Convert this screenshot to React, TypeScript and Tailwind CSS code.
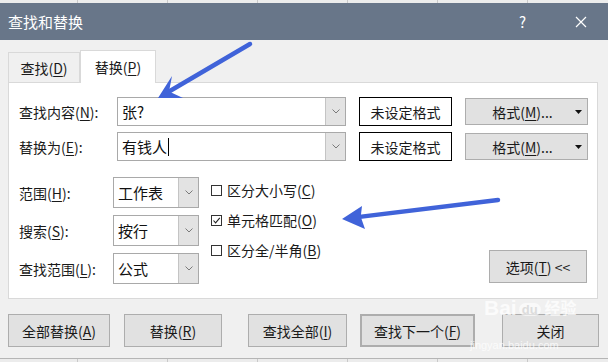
import type { JSX } from 'react';

const GRID_COLS = [78, 90, 90, 90, 90, 90, 90];

function SheetStrip({ top }: { top: boolean }): JSX.Element {
  return (
    <div className={`flex h-[4px] bg-[#ececec] ${top ? 'border-b border-[#9aa3ae]' : 'border-t border-[#b5b5b5]'}`}>
      {GRID_COLS.map((w, i) => (
        <div key={i} className="h-full shrink-0 border-r border-[#c9c9c9]" style={{ width: w }} />
      ))}
    </div>
  );
}

function Chevron(): JSX.Element {
  return (
    <svg width="8" height="5" viewBox="0 0 8 5">
      <path d="M0.5 0.5 L4 4 L7.5 0.5" fill="none" stroke="#7a7a7a" strokeWidth="1" />
    </svg>
  );
}

function Combo({ value, width, height, caret }: { value: string; width: string; height: string; caret?: boolean }): JSX.Element {
  return (
    <div className={`flex ${width} ${height} shrink-0 border border-[#a9a9a9] bg-white`}>
      <div className="flex flex-1 items-center pl-[4px] text-[15px] text-[#111]">
        {value}
        {caret && <span className="ml-[1px] h-[18px] w-[1px] bg-black" />}
      </div>
      <div className="flex w-[20px] items-center justify-center border-l border-[#c4c4c4] bg-[#e3e3e3]">
        <Chevron />
      </div>
    </div>
  );
}

function Key({ k }: { k: string }): JSX.Element {
  return <span className="underline decoration-1 underline-offset-[2px]">{k}</span>;
}

function Label({ text, k, width }: { text: string; k: string; width: string }): JSX.Element {
  return (
    <div className={`${width} shrink-0 text-[14px] text-[#1a1a1a]`}>
      {text}(<Key k={k} />):
    </div>
  );
}

function Btn({ children, className }: { children: React.ReactNode; className: string }): JSX.Element {
  return (
    <div className={`flex shrink-0 items-center justify-center border border-[#adadad] bg-[#e1e1e1] text-[14px] text-[#1a1a1a] ${className}`}>
      {children}
    </div>
  );
}

function FieldRow({ label, k, value, caret }: { label: string; k: string; value: string; caret?: boolean }): JSX.Element {
  return (
    <div className="flex h-[29px] items-center">
      <Label text={label} k={k} width="w-[98px]" />
      <Combo value={value} width="w-[229px]" height="h-[29px]" caret={caret} />
      <div className="ml-[13px] flex h-[29px] w-[93px] shrink-0 items-center justify-center border border-black bg-white text-[14px] text-[#1a1a1a]">
        未设定格式
      </div>
      <Btn className="relative ml-[13px] h-[27px] w-[123px]">
        <span className="-ml-[8px]">
          格式(<Key k="M" />)...
        </span>
        <svg className="absolute right-[5px] top-[11px]" width="7" height="4" viewBox="0 0 7 4">
          <path d="M0 0 L7 0 L3.5 4 Z" fill="#111" />
        </svg>
      </Btn>
    </div>
  );
}

function Check({ label, k, checked }: { label: string; k: string; checked?: boolean }): JSX.Element {
  return (
    <div className="flex h-[30px] items-center text-[14px] text-[#1a1a1a]">
      <div className="mr-[5px] flex h-[11px] w-[11px] items-center justify-center border border-[#333] bg-white">
        {checked && (
          <svg width="9" height="9" viewBox="0 0 9 9">
            <path d="M1.5 4.5 L3.6 6.8 L7.8 1.8" fill="none" stroke="#222" strokeWidth="1.1" />
          </svg>
        )}
      </div>
      {label}(<Key k={k} />)
    </div>
  );
}

function Arrow({ x1, y1, x2, y2, w1, w2 }: { x1: number; y1: number; x2: number; y2: number; w1: [number, number]; w2: [number, number] }): JSX.Element {
  return (
    <g>
      <path d={`M ${x1} ${y1} L ${x2 + (x1 - x2) * 0.06} ${y2 + (y1 - y2) * 0.06}`} stroke="#4063d9" strokeWidth="4.5" strokeLinecap="round" />
      <path d={`M ${x2} ${y2} L ${w1[0]} ${w1[1]} L ${x2 + (x1 - x2) * 0.12} ${y2 + (y1 - y2) * 0.12} L ${w2[0]} ${w2[1]} Z`} fill="#4063d9" />
    </g>
  );
}

export default function App(): JSX.Element {
  return (
    <div className="relative flex h-[362px] w-[608px] flex-col overflow-hidden bg-[#f0f0f0] font-['Noto_Sans_CJK_SC','Noto_Sans',sans-serif] leading-none">
      <div className="h-[3px] overflow-hidden">
        <SheetStrip top />
      </div>
      <div className="flex h-[37px] items-center bg-[#687689] pl-[8px] text-[15px] text-white">
        <span>查找和替换</span>
        <span className="ml-auto mr-[49px] text-[15px]">?</span>
        <svg className="mr-[21px]" width="12" height="12" viewBox="0 0 12 12">
          <path d="M1 1 L11 11 M11 1 L1 11" stroke="#fff" strokeWidth="1.2" />
        </svg>
      </div>

      <div className="flex flex-1 flex-col px-[8px]">
        {/* tabs */}
        <div className="mt-[10px] flex h-[32px] items-end">
          <div className="flex h-[30px] w-[72px] items-center justify-center border border-b-0 border-[#d9d9d9] bg-[#f0f0f0] text-[14px] text-[#1a1a1a]">
            查找(<Key k="D" />)
          </div>
          <div className="relative z-10 -mb-px flex h-[33px] w-[76px] items-center justify-center border border-b-0 border-[#d9d9d9] bg-white text-[14px] text-[#1a1a1a]">
            替换(<Key k="P" />)
          </div>
        </div>

        {/* panel */}
        <div className="flex h-[217px] w-[590px] flex-col border border-[#d9d9d9] bg-white pl-[10px] pt-[14px]">
          <FieldRow label="查找内容" k="N" value="张?" />
          <div className="h-[6px]" />
          <FieldRow label="替换为" k="E" value="有钱人" caret />

          <div className="mt-[16px] flex">
            <div className="flex flex-col gap-[7px]">
              {[
                ['范围', 'H', '工作表'],
                ['搜索', 'S', '按行'],
                ['查找范围', 'L', '公式'],
              ].map(([l, k, v]) => (
                <div key={k} className="flex h-[31px] items-center">
                  <Label text={l} k={k} width="w-[94px]" />
                  <Combo value={v} width="w-[86px]" height="h-[31px]" />
                </div>
              ))}
            </div>
            <div className="-mt-[2px] ml-[12px] flex flex-col">
              <Check label="区分大小写" k="C" />
              <Check label="单元格匹配" k="O" checked />
              <Check label="区分全/半角" k="B" />
            </div>
            <div className="ml-auto mr-[10px] flex flex-col justify-end pb-[1px]">
              <Btn className="h-[33px] w-[98px]">
                选项(<Key k="T" />)&nbsp;&lt;&lt;
              </Btn>
            </div>
          </div>
        </div>

        {/* bottom buttons */}
        <div className="mt-[15px] flex h-[33px]">
          <Btn className="h-[33px] w-[102px]">
            全部替换(<Key k="A" />)
          </Btn>
          <Btn className="ml-[14px] h-[33px] w-[98px]">
            替换(<Key k="R" />)
          </Btn>
          <Btn className="ml-[26px] h-[33px] w-[99px]">
            查找全部(<Key k="I" />)
          </Btn>
          <Btn className="ml-[13px] h-[33px] w-[115px] border-2 border-[#0078d7]">
            查找下一个(<Key k="F" />)
          </Btn>
          <Btn className="ml-[27px] h-[33px] w-[97px]">关闭</Btn>
        </div>
      </div>

      <div className="mt-auto h-[4px] overflow-hidden">
        <SheetStrip top={false} />
      </div>

      {/* annotation arrows */}
      <svg className="pointer-events-none absolute left-0 top-0" width="608" height="362" viewBox="0 0 608 362">
        <Arrow x1={250} y1={44} x2={158} y2={98} w1={[172, 76]} w2={[183, 98]} />
        <Arrow x1={498} y1={200} x2={342} y2={219} w1={[362, 206]} w2={[365, 229]} />
      </svg>

      {/* watermark */}
      <div className="pointer-events-none absolute left-[484px] top-[298px] flex h-[20px] items-end gap-[2px] text-white opacity-75">
        <span className="font-['Liberation_Sans',sans-serif] text-[21px] font-bold">Bai</span>
        <span className="mb-[2px] rounded-[7px] bg-white/80 px-[3px] font-['Liberation_Sans',sans-serif] text-[13px] font-bold text-[#d6d6d6]">du</span>
        <span className="ml-[2px] mb-[3px] text-[16px] font-bold">经验</span>
      </div>
      <div className="pointer-events-none absolute left-[470px] top-[340px] font-['Liberation_Sans',sans-serif] text-[11px] text-white opacity-75">
        jingyan.baidu.com
      </div>
    </div>
  );
}
